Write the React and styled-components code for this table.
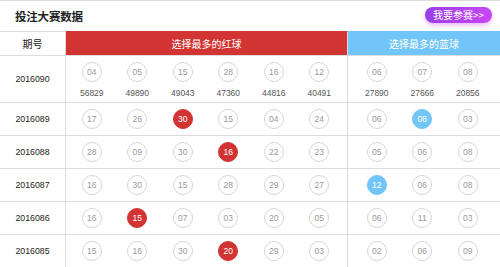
import styled, { createGlobalStyle } from "styled-components";

const GlobalStyle = createGlobalStyle`
  html, body {
    margin: 0;
    padding: 0;
    background: #fff;
    font-family: "Liberation Sans", "Noto Sans CJK SC", sans-serif;
  }
`;

const Page = styled.div`
  width: 500px;
  height: 267px;
  overflow: hidden;
  border-top: 1px solid #dcdcdc;
  box-sizing: border-box;
`;

const TopBar = styled.div`
  height: 30px;
  display: flex;
  align-items: center;
  justify-content: space-between;
  padding: 0 8px 0 15px;
`;

const Title = styled.h2`
  margin: 0;
  font-family: "Noto Sans CJK SC", sans-serif;
  font-size: 11.5px;
  font-weight: bold;
  color: #222;
  letter-spacing: -0.2px;
`;

const JoinButton = styled.button`
  height: 16px;
  width: 67px;
  margin-top: -2px;
  border: none;
  border-radius: 8px;
  background: linear-gradient(90deg, #9a3ee6, #c848f2);
  box-shadow: 0 2px 4px rgba(210, 90, 240, 0.45);
  color: #fff;
  font-family: "Noto Sans CJK SC", sans-serif;
  font-size: 10px;
  line-height: 16px;
  padding: 0;
  cursor: pointer;
`;

const Grid = styled.div`
  display: grid;
  grid-template-columns: 66px 282px 1fr;
`;

const HeadCell = styled.div`
  height: 23px;
  display: flex;
  align-items: center;
  justify-content: center;
  font-family: "Noto Sans CJK SC", sans-serif;
  font-size: 10px;
  color: ${(p) => (p.$bg ? "#fff" : "#222")};
  background: ${(p) => p.$bg || "#fff"};
  border-top: 1px solid ${(p) => (p.$bg ? p.$bg : "#dcdcdc")};
  border-bottom: 1px solid #dcdcdc;
  border-right: ${(p) => (p.$last ? "none" : "1px solid #dcdcdc")};
`;

const Cell = styled.div`
  height: ${(p) => (p.$tall ? "46px" : "32px")};
  border-bottom: 1px solid #dcdcdc;
  border-right: ${(p) => (p.$last ? "none" : "1px solid #dcdcdc")};
  display: flex;
  align-items: ${(p) => (p.$tall ? "flex-start" : "center")};
  padding-left: ${(p) => p.$pad || 0}px;
`;

const Period = styled(Cell)`
  justify-content: center;
  align-items: center;
  padding-left: 0;
  font-size: 8.8px;
  color: #222;
`;

const Slot = styled.div`
  width: 45.5px;
  display: flex;
  flex-direction: column;
  align-items: center;
  padding-top: ${(p) => (p.$tall ? 6 : 0)}px;
`;

const Ball = styled.div`
  width: 20px;
  height: 20px;
  box-sizing: border-box;
  border-radius: 50%;
  display: flex;
  align-items: center;
  justify-content: center;
  font-size: 8.5px;
  color: ${(p) => (p.$fill ? "#fff" : "#999")};
  background: ${(p) => p.$fill || "#fff"};
  border: 1px solid ${(p) => p.$fill || "#d6d6d6"};
`;

const Count = styled.div`
  margin-top: 5px;
  font-size: 8.5px;
  line-height: 12px;
  color: #555;
`;

const RED = "#d23333";
const BLUE = "#72c5f8";

const first = {
  period: "2016090",
  red: [
    ["04", "56829"],
    ["05", "49890"],
    ["15", "49043"],
    ["28", "47360"],
    ["16", "44816"],
    ["12", "40491"],
  ],
  blue: [
    ["06", "27890"],
    ["07", "27666"],
    ["08", "20856"],
  ],
};

const rows = [
  { period: "2016089", red: ["17", "26", "30", "15", "04", "24"], hr: 2, blue: ["06", "08", "03"], hb: 1 },
  { period: "2016088", red: ["28", "09", "30", "16", "22", "23"], hr: 3, blue: ["05", "06", "08"], hb: -1 },
  { period: "2016087", red: ["16", "30", "15", "28", "29", "27"], hr: -1, blue: ["12", "06", "08"], hb: 0 },
  { period: "2016086", red: ["16", "15", "07", "03", "20", "05"], hr: 1, blue: ["06", "11", "03"], hb: -1 },
  { period: "2016085", red: ["15", "16", "30", "20", "29", "03"], hr: 3, blue: ["02", "06", "09"], hb: -1 },
];

export default function App() {
  return (
    <>
      <GlobalStyle />
      <Page>
        <TopBar>
          <Title>投注大赛数据</Title>
          <JoinButton>我要参赛&gt;&gt;</JoinButton>
        </TopBar>
        <Grid>
          <HeadCell>期号</HeadCell>
          <HeadCell $bg={RED}>选择最多的红球</HeadCell>
          <HeadCell $bg={BLUE} $last>选择最多的蓝球</HeadCell>

          <Period $tall>{first.period}</Period>
          <Cell $tall $pad={3}>
            {first.red.map(([n, c]) => (
              <Slot $tall key={n + c}>
                <Ball>{n}</Ball>
                <Count>{c}</Count>
              </Slot>
            ))}
          </Cell>
          <Cell $tall $pad={6} $last>
            {first.blue.map(([n, c]) => (
              <Slot $tall key={n + c}>
                <Ball>{n}</Ball>
                <Count>{c}</Count>
              </Slot>
            ))}
          </Cell>

          {rows.map((r) => [
            <Period key={r.period + "p"}>{r.period}</Period>,
            <Cell key={r.period + "r"} $pad={3}>
              {r.red.map((n, i) => (
                <Slot key={i}>
                  <Ball $fill={i === r.hr ? RED : undefined}>{n}</Ball>
                </Slot>
              ))}
            </Cell>,
            <Cell key={r.period + "b"} $pad={6} $last>
              {r.blue.map((n, i) => (
                <Slot key={i}>
                  <Ball $fill={i === r.hb ? BLUE : undefined}>{n}</Ball>
                </Slot>
              ))}
            </Cell>,
          ])}
        </Grid>
      </Page>
    </>
  );
}
